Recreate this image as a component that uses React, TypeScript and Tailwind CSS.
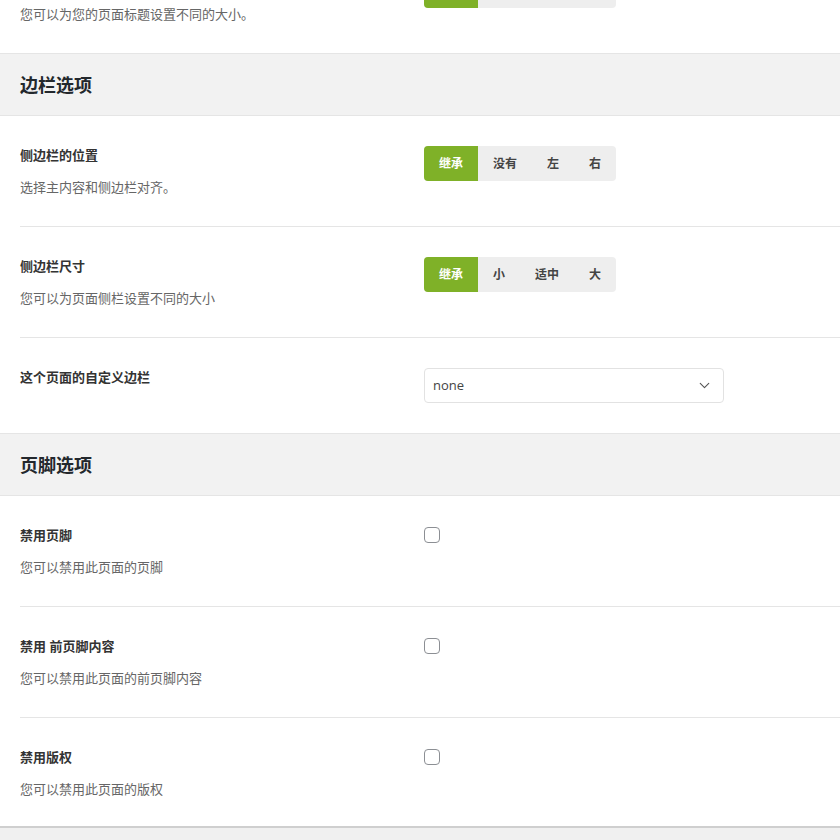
import React from "react";
import { ChevronDown } from "lucide-react";

const FONT = { fontFamily: '"Open Sans", "Noto Sans CJK SC", sans-serif' };

function Segmented({ options, active = 0 }: { options: string[]; active?: number }) {
  return (
    <div className="flex h-[35px] w-fit overflow-hidden rounded-[4px] bg-[#eeeeee]">
      {options.map((o, i) => (
        <div
          key={o}
          className={
            i === active
              ? "flex items-center bg-[#7fb128] px-[15px] text-[12px] font-bold text-white"
              : "flex items-center px-[15px] text-[12px] font-bold text-[#444]"
          }
        >
          {o}
        </div>
      ))}
    </div>
  );
}

function Checkbox() {
  return <div className="mt-[1px] h-[16px] w-[16px] rounded-[4px] border border-[#8c8f94] bg-white" />;
}

function Row({
  label,
  desc,
  control,
  border = true,
  last = false,
}: {
  label: string;
  desc?: string;
  control: React.ReactNode;
  border?: boolean;
  last?: boolean;
}) {
  return (
    <div className={border ? "border-b border-[#e5e5e5]" : ""}>
      <div className={last ? "flex pb-[28px] pt-[30px]" : "flex py-[30px]"}>
        <div className="w-[404px] shrink-0">
          <div className="text-[13px] font-bold leading-[19px] text-[#333]">{label}</div>
          {desc && <div className="mt-[13px] text-[13px] leading-[18px] text-[#666]">{desc}</div>}
        </div>
        <div>{control}</div>
      </div>
    </div>
  );
}

function SectionHeader({ title }: { title: string }) {
  return (
    <div className="-ml-[20px] border-y border-[#e5e5e5] bg-[#f2f2f2] pb-[17px] pl-[20px] pt-[19px]">
      <h2 className="text-[18px] font-bold leading-[25px] text-[#23282d]">{title}</h2>
    </div>
  );
}

export default function App() {
  return (
    <div className="h-[840px] w-[840px] overflow-hidden bg-white" style={FONT}>
      <div className="-mt-[57px] pl-[20px]">
        <Row
          label="页面标题尺寸"
          desc="您可以为您的页面标题设置不同的大小。"
          control={<Segmented options={["继承", "小", "适中", "大"]} />}
          border={false}
        />

        <SectionHeader title="边栏选项" />
        <Row
          label="侧边栏的位置"
          desc="选择主内容和侧边栏对齐。"
          control={<Segmented options={["继承", "没有", "左", "右"]} />}
        />
        <Row
          label="侧边栏尺寸"
          desc="您可以为页面侧栏设置不同的大小"
          control={<Segmented options={["继承", "小", "适中", "大"]} />}
        />
        <Row
          label="这个页面的自定义边栏"
          border={false}
          control={
            <div className="flex h-[35px] w-[300px] items-center justify-between rounded-[4px] border border-[#e2e2e2] bg-white pl-[8px] pr-[10px]">
              <span className="pt-[1px] text-[13px] text-[#444]">none</span>
              <ChevronDown size={17} strokeWidth={1.6} className="text-[#555]" />
            </div>
          }
        />

        <SectionHeader title="页脚选项" />
        <Row label="禁用页脚" desc="您可以禁用此页面的页脚" control={<Checkbox />} />
        <Row label="禁用 前页脚内容" desc="您可以禁用此页面的前页脚内容" control={<Checkbox />} />
        <Row label="禁用版权" desc="您可以禁用此页面的版权" control={<Checkbox />} border={false} last />
      </div>
      <div className="h-[20px] border-t-2 border-[#cfcfcf] bg-[#f0f0f0]" />
    </div>
  );
}
